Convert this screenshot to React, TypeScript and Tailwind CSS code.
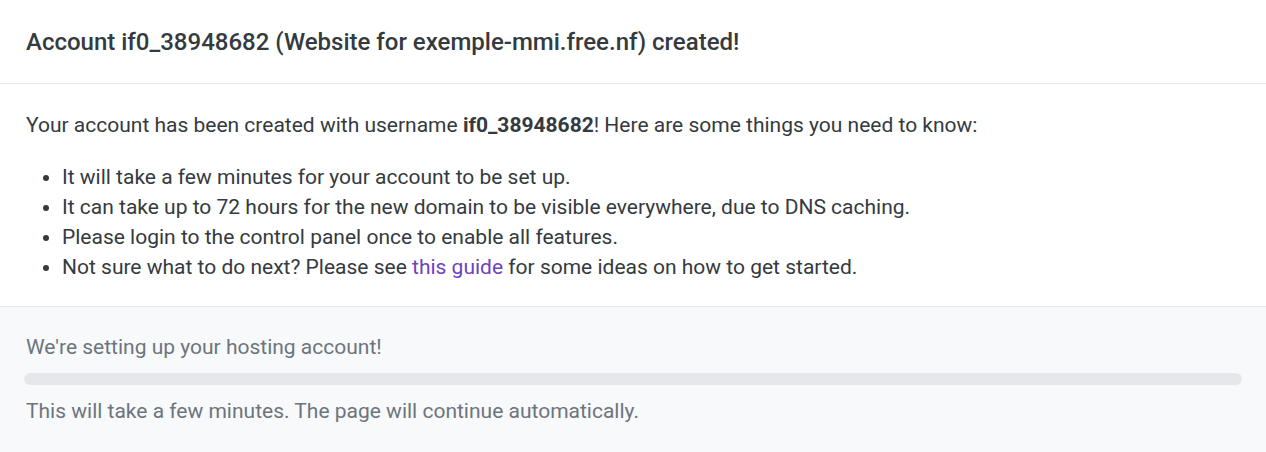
export default function App() {
  return (
    <div className="w-[1266px] h-[452px] overflow-hidden bg-white text-[#343a40]" style={{ fontFamily: 'Roboto, "Noto Sans", sans-serif' }}>
      <div className="px-6 pt-[27px] pb-[26px] border-b border-[#e5e7eb]">
        <h1 className="text-[24px] leading-[30px] font-medium pl-[2px]">
          Account if0_38948682 (Website for exemple-mmi.free.nf) created!
        </h1>
      </div>
      <div className="px-6 pt-[26px] pb-[24px] text-[21px] leading-[30px]">
        <p className="mb-[22px] pl-[2px]">
          Your account has been created with username <b className="font-bold">if0_38948682</b>! Here are some things you need to know:
        </p>
        <ul className="list-disc pl-[38px]">
          <li>It will take a few minutes for your account to be set up.</li>
          <li>It can take up to 72 hours for the new domain to be visible everywhere, due to DNS caching.</li>
          <li>Please login to the control panel once to enable all features.</li>
          <li>
            Not sure what to do next? Please see <a className="text-[#6f42c1]">this guide</a> for some ideas on how to get started.
          </li>
        </ul>
      </div>
      <div className="border-t border-[#e5e7eb] bg-[#f8f9fa] px-6 pt-[25px] pb-[26px] text-[21px] leading-[30px] text-[#6c757d]">
        <p className="pl-[2px]">We're setting up your hosting account!</p>
        <div className="mt-[11px] mb-[11px] h-[12px] rounded-full bg-[#e5e7eb]"></div>
        <p className="pl-[2px]">This will take a few minutes. The page will continue automatically.</p>
      </div>
    </div>
  );
}
